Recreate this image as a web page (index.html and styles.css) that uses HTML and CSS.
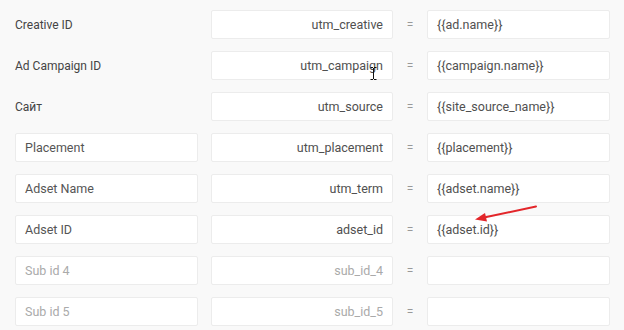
FILE: index.html
```html
<!DOCTYPE html>
<html>
<head>
<meta charset="utf-8">
<link rel="stylesheet" href="styles.css">
</head>
<body>
<div class="form">
  <div class="row">
    <div class="label">Creative ID</div>
    <div class="box key">utm_creative</div>
    <div class="eq">=</div>
    <div class="box val">{{ad.name}}</div>
  </div>
  <div class="row">
    <div class="label">Ad Campaign ID</div>
    <div class="box key cursor-host">utm_campaign<svg class="ibeam" width="7" height="13" viewBox="0 0 7 13"><path d="M0.5 0.5h2.5M4 0.5h2.5M3.5 1v11M0.5 12.5h2.5M4 12.5h2.5" stroke="#111" stroke-width="1" fill="none"/></svg></div>
    <div class="eq">=</div>
    <div class="box val">{{campaign.name}}</div>
  </div>
  <div class="row">
    <div class="label">Сайт</div>
    <div class="box key">utm_source</div>
    <div class="eq">=</div>
    <div class="box val">{{site_source_name}}</div>
  </div>
  <div class="row">
    <div class="box name">Placement</div>
    <div class="box key">utm_placement</div>
    <div class="eq">=</div>
    <div class="box val">{{placement}}</div>
  </div>
  <div class="row">
    <div class="box name">Adset Name</div>
    <div class="box key">utm_term</div>
    <div class="eq">=</div>
    <div class="box val">{{adset.name}}</div>
  </div>
  <div class="row">
    <div class="box name">Adset ID</div>
    <div class="box key">adset_id</div>
    <div class="eq">=</div>
    <div class="box val arrow-host">{{adset.id}}<svg class="arrow" width="66" height="18" viewBox="0 0 66 18"><line x1="62" y1="1.5" x2="10" y2="12.5" stroke="#e3262a" stroke-width="2" stroke-linecap="round"/><path d="M1 14.5 L11 8 L13 16.5 Z" fill="#e3262a"/></svg></div>
  </div>
  <div class="row">
    <div class="box name muted">Sub id 4</div>
    <div class="box key muted">sub_id_4</div>
    <div class="eq">=</div>
    <div class="box val"></div>
  </div>
  <div class="row">
    <div class="box name muted">Sub id 5</div>
    <div class="box key muted">sub_id_5</div>
    <div class="eq">=</div>
    <div class="box val"></div>
  </div>
</div>
</body>
</html>
```

FILE: styles.css
```css
html, body {
  margin: 0;
  padding: 0;
  background: #f9f9f9;
}
body {
  font-family: Roboto, "Noto Sans", Arial, sans-serif;
  font-size: 12.5px;
  color: #444;
  width: 624px;
  height: 330px;
  overflow: hidden;
}
.form {
  display: flex;
  flex-direction: column;
  gap: 12px;
  padding: 10px 0 0 15px;
}
.row {
  display: flex;
  align-items: stretch;
  height: 29px;
}
.label {
  width: 183px;
  margin-right: 13px;
  display: flex;
  align-items: center;
  color: #444;
  font-size: 12px;
}
.box {
  box-sizing: border-box;
  background: #fff;
  border: 1px solid #ececec;
  border-radius: 2px;
  display: flex;
  align-items: center;
  padding: 0 9px;
  white-space: nowrap;
}
.name {
  width: 183px;
  margin-right: 13px;
  color: #555;
}
.key {
  width: 182px;
  justify-content: flex-end;
  color: #505050;
}
.val {
  width: 183px;
  color: #505050;
}
.muted {
  color: #aaa;
}
.eq {
  width: 34px;
  display: flex;
  align-items: center;
  justify-content: center;
  color: #999;
  font-size: 12px;
}
.cursor-host, .arrow-host {
  position: relative;
}
.ibeam {
  position: absolute;
  left: 158px;
  top: 15px;
}
.arrow {
  position: absolute;
  left: 46px;
  top: -11px;
}
```
